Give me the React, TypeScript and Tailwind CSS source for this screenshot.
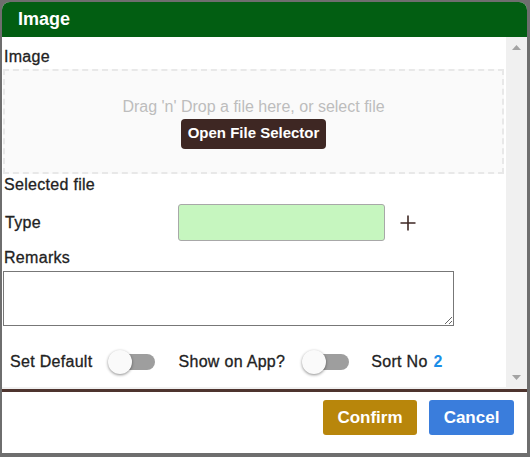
import React from "react";

function Toggle() {
  return (
    <div className="relative w-[47px] h-[24px] flex items-center">
      <div className="absolute left-[7px] right-0 h-[16px] rounded-full bg-[#9e9e9e]" />
      <div className="absolute left-0 w-[24px] h-[24px] rounded-full bg-[#fafafa] shadow-[0_1px_3px_rgba(0,0,0,0.45)]" />
    </div>
  );
}

const lbl = "text-[16px] tracking-[0.3px] [-webkit-text-stroke:0.3px_#222]";

export default function App() {
  return (
    <div
      className="w-[530px] h-[457px] bg-[#6e6e6e] pt-[2px] pl-[2px] pr-[3px] pb-[4px] text-[#222]"
      style={{ fontFamily: '"Liberation Sans", Arial, sans-serif' }}
    >
      <div className="w-full h-full bg-white rounded-t-[8px] overflow-hidden flex flex-col">
        <div className="h-[35px] bg-[#025e12] flex items-center pl-[16px] shrink-0">
          <span className="text-white text-[18px] font-bold">Image</span>
        </div>
        <div className="h-[352px] flex shrink-0">
          <div className="flex-1 flex flex-col">
            <div className="flex-1 flex flex-col pl-[1px] pr-[2px]">
              <div className="text-[16px] tracking-[0.3px] [-webkit-text-stroke:0.3px_#222] pl-[1px] pt-[11px] leading-[18px]">Image</div>
              <div className="mt-[3px] h-[105px] border-2 border-dashed border-[#e8e8e8] bg-[#fafafa] flex flex-col items-center justify-center">
                <div className="text-[16px] text-[#bdbdbd] leading-[18px] mt-[3px]">
                  Drag 'n' Drop a file here, or select file
                </div>
                <button className="mt-[3px] h-[30px] w-[145px] bg-[#3e2723] text-white text-[15px] font-bold rounded-[4px]">
                  Open File Selector
                </button>
              </div>
              <div className="text-[16px] tracking-[0.3px] [-webkit-text-stroke:0.3px_#222] pl-[1px] mt-[2px] leading-[18px]">Selected file</div>
              <div className="flex items-center mt-[10px] h-[37px]">
                <div className="w-[175px] text-[16px] tracking-[0.3px] [-webkit-text-stroke:0.3px_#222] pl-[2px]">Type</div>
                <div className="w-[207px] h-[37px] bg-[#c6f6bf] border border-[#a8a8a8] rounded-[3px]" />
                <svg className="ml-[15px]" width="16" height="16" viewBox="0 0 16 16">
                  <path d="M8 0.5V15.5M0.5 8H15.5" stroke="#3e2723" strokeWidth="1.6" />
                </svg>
              </div>
              <div className="text-[16px] tracking-[0.3px] [-webkit-text-stroke:0.3px_#222] pl-[1px] mt-[8px] leading-[18px]">Remarks</div>
              <textarea className="mt-[4px] w-[451px] h-[55px] border border-[#777] resize" />
              <div className="flex items-center mt-[24px] h-[24px] text-[16px] tracking-[0.3px] [-webkit-text-stroke:0.3px_#222]">
                <span className="ml-[7px]">Set Default</span>
                <div className="ml-[16px]">
                  <Toggle />
                </div>
                <span className="ml-[23px]">Show on App?</span>
                <div className="ml-[17px]">
                  <Toggle />
                </div>
                <span className="ml-[22px]">Sort No</span>
                <span className="ml-[6px] text-[#1a8ee8] font-bold [-webkit-text-stroke:0px]">2</span>
              </div>
            </div>
            <div className="h-[2px] bg-[#f0f0f0]" />
          </div>
          <div className="w-[21px] bg-[#f0f0f0] flex flex-col items-center justify-between pt-[8px] pb-[9px]">
            <svg width="9" height="5" viewBox="0 0 9 5">
              <path d="M0 5L4.5 0L9 5Z" fill="#a3a3a3" />
            </svg>
            <svg width="9" height="5" viewBox="0 0 9 5">
              <path d="M0 0L4.5 5L9 0Z" fill="#a3a3a3" />
            </svg>
          </div>
        </div>
        <div className="h-[3px] bg-[#4e342e] shrink-0" />
        <div className="flex-1 flex justify-end items-start pt-[8px] pr-[13px] gap-[12px]">
          <button className="h-[35px] w-[94px] bg-[#b8860b] text-white text-[17px] font-bold rounded-[3px]">
            Confirm
          </button>
          <button className="h-[35px] w-[85px] bg-[#3a7ddc] text-white text-[17px] font-bold rounded-[3px]">
            Cancel
          </button>
        </div>
      </div>
    </div>
  );
}
